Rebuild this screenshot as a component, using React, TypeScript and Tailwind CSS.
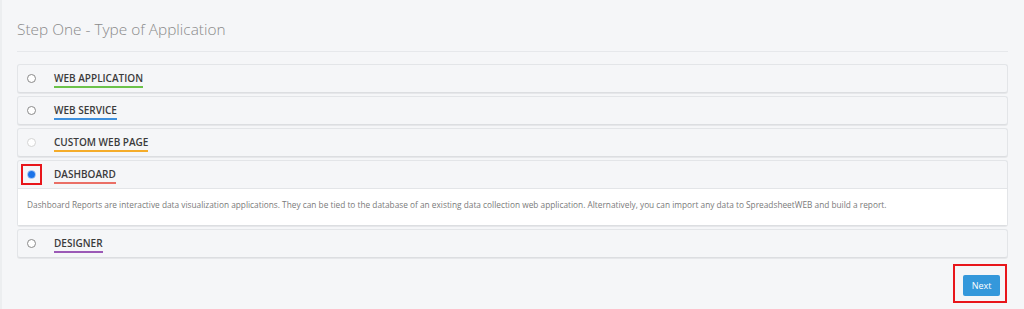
import React from 'react';

type Option = {
  label: string;
  accent: string;
  selected?: boolean;
  disabled?: boolean;
  description?: string;
};

const options: Option[] = [
  { label: 'WEB APPLICATION', accent: 'border-[#6cc24a]' },
  { label: 'WEB SERVICE', accent: 'border-[#3c8fdd]' },
  { label: 'CUSTOM WEB PAGE', accent: 'border-[#f5ac2a]', disabled: true },
  {
    label: 'DASHBOARD',
    accent: 'border-[#ea6f66]',
    selected: true,
    description:
      'Dashboard Reports are interactive data visualization applications. They can be tied to the database of an existing data collection web application. Alternatively, you can import any data to SpreadsheetWEB and build a report.',
  },
  { label: 'DESIGNER', accent: 'border-[#9b59b6]' },
];

function Radio({ selected, disabled }: { selected?: boolean; disabled?: boolean }) {
  if (selected) {
    return (
      <span className="flex h-[9px] w-[9px] items-center justify-center rounded-full border border-[#8fb8f0] bg-white">
        <span className="h-[7px] w-[7px] rounded-full bg-[#1a73e8]" />
      </span>
    );
  }
  return (
    <span
      className={
        disabled
          ? 'h-[9px] w-[9px] rounded-full border border-[#d4d4d4] bg-white'
          : 'h-[9px] w-[9px] rounded-full border border-[#8a8a8a] bg-white'
      }
    />
  );
}

function OptionPanel({ option }: { option: Option }) {
  return (
    <div className="rounded-[3px] border border-[#e3e5e8] border-b-[#dcdee1] bg-[#f5f6f8] shadow-[0_1px_0_#e6e7ea]">
      <div className="flex h-[27px] items-center">
        <div className="flex w-[26px] justify-center">
          {option.selected ? (
            <span className="flex h-[21px] w-[21px] shrink-0 items-center justify-center border-2 border-[#e8161b]">
              <Radio selected />
            </span>
          ) : (
            <Radio disabled={option.disabled} />
          )}
        </div>
        <span
          className={`ml-[10px] inline-block border-b-2 pt-[3px] pb-[1px] text-[10px] leading-[13px] font-semibold text-[#3b3b3b] ${option.accent}`}
        >
          {option.label}
        </span>
      </div>
      {option.description && (
        <div className="border-t border-[#e3e5e8] bg-white px-[9px] pt-[10px] pb-[15px] text-[8.3px] leading-[11px] text-[#7a7a7a]">
          {option.description}
        </div>
      )}
    </div>
  );
}

export default function App() {
  return (
    <div className="min-h-[309px] w-full border-l-2 border-[#eceef0] bg-[#f5f6f8] pt-[19px] pr-[16px] pl-[15px] font-['Open_Sans',sans-serif]">
      <h2 className="text-[15.4px] leading-[22px] font-light text-[#8a8a8a]">Step One - Type of Application</h2>
      <div className="mt-[10px] border-t border-[#e6e8eb]" />

      <div className="mt-[12px] flex flex-col gap-[3px]">
        {options.map((o) => (
          <OptionPanel key={o.label} option={o} />
        ))}
      </div>

      <div className="mt-[6px] flex justify-end pr-[1px]">
        <div className="border-2 border-[#e8161b] pt-[5px] pr-[5px] pb-[5px] pl-[8px]">
          <button className="h-[21px] w-[37px] rounded-[2px] bg-[#3498db] text-[9px] text-white">Next</button>
        </div>
      </div>
    </div>
  );
}
